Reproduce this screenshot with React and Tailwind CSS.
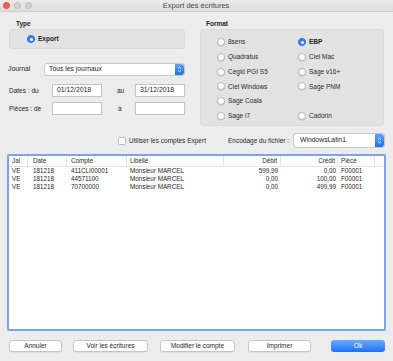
import React from "react";

const font = { fontFamily: '"Liberation Sans", Arial, sans-serif' };

const Radio = ({ checked }) =>
  checked ? (
    <span className="w-[8px] h-[8px] rounded-full bg-[#3583f6] border border-[#2a6fe0] flex items-center justify-center shrink-0">
      <span className="w-[3px] h-[3px] rounded-full bg-white" />
    </span>
  ) : (
    <span className="w-[8px] h-[8px] rounded-full bg-white border border-[#b9b9b9] shadow-[0_0.5px_1px_rgba(0,0,0,0.15)] shrink-0" />
  );

const Option = ({ label, checked }) => (
  <div className="flex items-center gap-[3px] h-[14.7px]">
    <Radio checked={checked} />
    <span className={checked ? "font-bold text-[6.5px] text-[#1e1e1e]" : "text-[6.5px] text-[#2a2a2a]"}>
      {label}
    </span>
  </div>
);

const Cap = () => (
  <span className="w-[9px] self-stretch bg-gradient-to-b from-[#5fa2f8] to-[#1d6ff0] rounded-r-[3px] flex items-center justify-center">
    <svg width="5" height="7" viewBox="0 0 5 7">
      <path d="M1 2.6 L2.5 1.2 L4 2.6 M1 4.4 L2.5 5.8 L4 4.4" stroke="white" strokeWidth="0.9" fill="none" />
    </svg>
  </span>
);

const Input = ({ value }) => (
  <div className="w-[50px] h-[13px] bg-white border border-[#c3c3c3] flex items-center px-[4px] text-[6.8px] text-[#1e1e1e]">
    {value}
  </div>
);

const Button = ({ label, w, primary }) => (
  <div
    className={
      primary
        ? "h-[12px] rounded-[3px] bg-gradient-to-b from-[#6aabf9] to-[#1b70f1] text-white flex items-center justify-center text-[6.5px]"
        : "h-[12px] rounded-[3px] bg-white border border-[#c4c4c4] shadow-[0_0.5px_0.5px_rgba(0,0,0,0.1)] text-[#1e1e1e] flex items-center justify-center text-[6.5px]"
    }
    style={{ width: w }}
  >
    {label}
  </div>
);

const rows = [
  ["VE", "181218", "411CLI00001", "Monsieur MARCEL", "599,99", "0,00", "F00001"],
  ["VE", "181218", "44571100", "Monsieur MARCEL", "0,00", "100,00", "F00001"],
  ["VE", "181218", "70700000", "Monsieur MARCEL", "0,00", "499,99", "F00001"],
];

const cols = "grid grid-cols-[19px_39px_60px_97px_57px_57px_37px_1fr]";

export default function App() {
  return (
    <div style={font} className="w-[393px] h-[361px] bg-[#ececec] flex flex-col overflow-hidden text-[#1e1e1e]">
      {/* title bar */}
      <div className="h-[12px] shrink-0 flex items-center border-b border-[#cdcdcd] bg-gradient-to-b from-[#ebebeb] to-[#dcdcdc] relative">
        <div className="flex items-center gap-[4px] pl-[3px]">
          <span className="w-[7px] h-[7px] rounded-full bg-[#fc5f57] border border-[#e0443e]" />
          <span className="w-[7px] h-[7px] rounded-full bg-[#d0d0d0] border border-[#bdbdbd]" />
          <span className="w-[7px] h-[7px] rounded-full bg-[#d0d0d0] border border-[#bdbdbd]" />
        </div>
        <span className="flex-1 text-center text-[7.5px] text-[#4a4a4a] pr-[33px]">Export des écritures</span>
      </div>

      {/* top section */}
      <div className="flex h-[114px] shrink-0">
        <div className="ml-[8px] w-[178px] flex flex-col">
          <div className="mt-[7px] h-[10px] leading-[10px] pl-[8px] font-bold text-[6.5px]">Type</div>
          <div className="ml-[1px] w-[176px] h-[20px] bg-[#e2e2e2] border border-[#d9d9d9] rounded-[3px] flex items-center pl-[17px]">
            <Option label="Export" checked />
          </div>
          <div className="mt-[14px] h-[13px] flex items-center">
            <span className="w-[36px] text-[6.8px]">Journal</span>
            <div className="w-[141px] h-[13px] bg-white border border-[#c6c6c6] rounded-[3px] flex items-stretch">
              <span className="flex-1 flex items-center pl-[4px] text-[6.8px]">Tous les journaux</span>
              <Cap />
            </div>
          </div>
          <div className="mt-[8px] h-[13px] flex items-center">
            <span className="w-[44px] text-[6.5px] pl-[1px]">Dates : du</span>
            <Input value="01/12/2018" />
            <span className="w-[33px] pl-[15px] text-[6.5px]">au</span>
            <Input value="31/12/2018" />
          </div>
          <div className="mt-[5px] h-[13px] flex items-center">
            <span className="w-[44px] text-[6.5px] pl-[1px]">Pièces : de</span>
            <Input value="" />
            <span className="w-[33px] pl-[16px] text-[6.5px]">à</span>
            <Input value="" />
          </div>
        </div>

        <div className="ml-[14px] w-[184px] flex flex-col">
          <div className="mt-[7px] h-[10px] leading-[10px] pl-[6px] font-bold text-[6.5px]">Format</div>
          <div className="h-[97px] bg-[#e2e2e2] border border-[#d9d9d9] rounded-[3px] pt-[5px] pl-[16px] grid grid-cols-[81px_1fr] content-start">
            <Option label="8sens" />
            <Option label="EBP" checked />
            <Option label="Quadratus" />
            <Option label="Ciel Mac" />
            <Option label="Cegid PGI S5" />
            <Option label="Sage v16+" />
            <Option label="Ciel Windows" />
            <Option label="Sage PNM" />
            <Option label="Sage Coala" />
            <div />
            <Option label="Sage i7" />
            <Option label="Cadorin" />
          </div>
        </div>
      </div>

      {/* options row */}
      <div className="mt-[7px] h-[15px] shrink-0 flex items-center">
        <span className="ml-[118px] w-[8px] h-[8px] bg-white border border-[#b9b9b9] rounded-[1.5px]" />
        <span className="ml-[3px] w-[99px] text-[6.5px] text-[#2a2a2a]">Utiliser les comptes Expert</span>
        <span className="w-[65px] text-[6.5px] text-[#2a2a2a]">Encodage du fichier :</span>
        <div className="w-[92px] h-[15px] bg-white border border-[#c6c6c6] rounded-[3px] flex items-stretch">
          <span className="flex-1 flex items-center pl-[6px] text-[6.8px]">WindowsLatin1</span>
          <Cap />
        </div>
      </div>

      {/* table */}
      <div className="mt-[6px] ml-[7px] w-[379px] h-[177px] shrink-0 bg-white border-2 border-[#7aa5ec] rounded-[2px] flex flex-col">
        <div className={`${cols} h-[11px] border-b border-[#e2e2e2] text-[6.3px] text-[#2a2a2a]`}>
          <span className="pl-[3px] border-r border-[#e4e4e4] flex items-center">Jal</span>
          <span className="pl-[5px] border-r border-[#e4e4e4] flex items-center">Date</span>
          <span className="pl-[4px] border-r border-[#e4e4e4] flex items-center">Compte</span>
          <span className="pl-[3px] border-r border-[#e4e4e4] flex items-center">Libellé</span>
          <span className="pr-[3px] border-r border-[#e4e4e4] flex items-center justify-end">Débit</span>
          <span className="pr-[2px] border-r border-[#e4e4e4] flex items-center justify-end">Crédit</span>
          <span className="pl-[3px] border-r border-[#e4e4e4] flex items-center">Pièce</span>
          <span />
        </div>
        {rows.map((r, i) => (
          <div key={i} className={`${cols} h-[8px] text-[6.3px] leading-[8px] text-[#1e1e1e]`}>
            <span className="pl-[3px]">{r[0]}</span>
            <span className="pl-[5px]">{r[1]}</span>
            <span className="pl-[4px]">{r[2]}</span>
            <span className="pl-[3px]">{r[3]}</span>
            <span className="pr-[3px] text-right">{r[4]}</span>
            <span className="pr-[2px] text-right">{r[5]}</span>
            <span className="pl-[3px]">{r[6]}</span>
            <span />
          </div>
        ))}
      </div>

      {/* buttons */}
      <div className="mt-[9px] ml-[9px] flex items-center">
        <Button label="Annuler" w="53px" />
        <div className="w-[11px]" />
        <Button label="Voir les écritures" w="75px" />
        <div className="w-[12px]" />
        <Button label="Modifier le compte" w="75px" />
        <div className="w-[13px]" />
        <Button label="Imprimer" w="63px" />
        <div className="w-[20px]" />
        <Button label="Ok" w="54px" primary />
      </div>
    </div>
  );
}
